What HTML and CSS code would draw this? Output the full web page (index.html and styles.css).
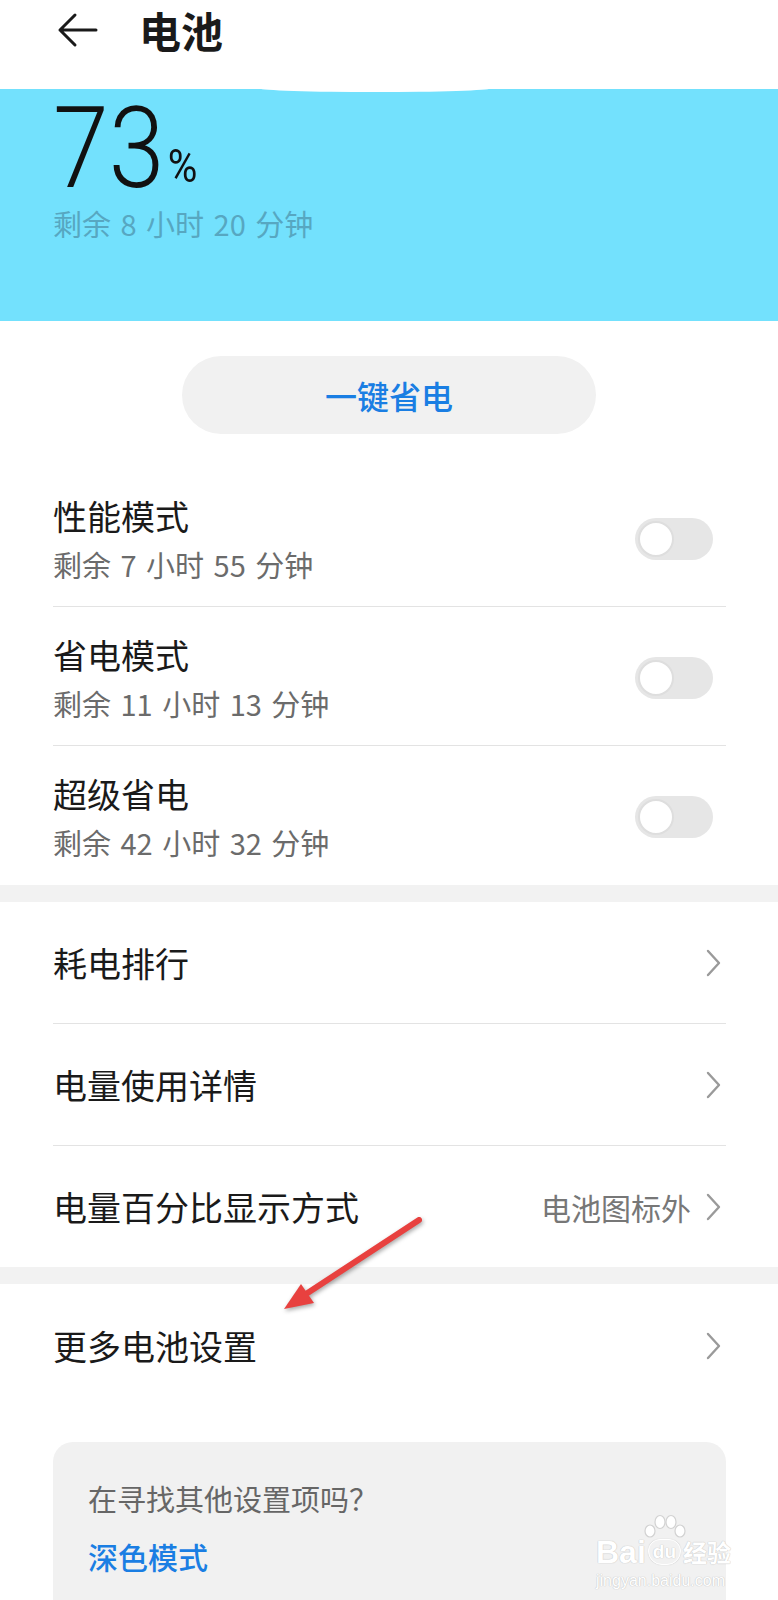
FILE: index.html
```html
<!DOCTYPE html>
<html lang="zh-CN">
<head>
<meta charset="utf-8">
<title>电池</title>
<link rel="stylesheet" href="styles.css">
</head>
<body>
<div class="page">
  <header class="topbar">
    <svg class="back" width="42" height="36" viewBox="0 0 42 36"><path d="M40 18H4M19 3L4 18l15 15" fill="none" stroke="#1a1a1a" stroke-width="3" stroke-linecap="round" stroke-linejoin="round"/></svg>
    <h1 class="title">电池</h1>
  </header>

  <section class="hero">
    <div class="level">73<span class="pct">%</span></div>
    <div class="remain">剩余 8 小时 20 分钟</div>
  </section>

  <div class="savebtn">一键省电</div>

  <section class="group first">
    <div class="trow">
      <div class="ttext"><div class="rtitle">性能模式</div><div class="rsub">剩余 7 小时 55 分钟</div></div>
      <span class="toggle"><span class="knob"></span></span>
    </div>
    <div class="trow">
      <div class="ttext"><div class="rtitle">省电模式</div><div class="rsub">剩余 11 小时 13 分钟</div></div>
      <span class="toggle"><span class="knob"></span></span>
    </div>
    <div class="trow last">
      <div class="ttext"><div class="rtitle">超级省电</div><div class="rsub">剩余 42 小时 32 分钟</div></div>
      <span class="toggle"><span class="knob"></span></span>
    </div>
  </section>

  <div class="band"></div>

  <section class="group">
    <div class="nrow"><span class="rtitle">耗电排行</span><span class="right"><svg class="chev" width="17" height="28" viewBox="0 0 17 28"><path d="M3 2l11 12L3 26" fill="none" stroke="#9a9a9a" stroke-width="2.4" stroke-linecap="round" stroke-linejoin="round"/></svg></span></div>
    <div class="nrow"><span class="rtitle">电量使用详情</span><span class="right"><svg class="chev" width="17" height="28" viewBox="0 0 17 28"><path d="M3 2l11 12L3 26" fill="none" stroke="#9a9a9a" stroke-width="2.4" stroke-linecap="round" stroke-linejoin="round"/></svg></span></div>
    <div class="nrow last"><span class="rtitle">电量百分比显示方式</span><span class="right"><span class="value">电池图标外</span><svg class="chev" width="17" height="28" viewBox="0 0 17 28"><path d="M3 2l11 12L3 26" fill="none" stroke="#9a9a9a" stroke-width="2.4" stroke-linecap="round" stroke-linejoin="round"/></svg></span></div>
  </section>

  <div class="band"></div>

  <section class="group">
    <div class="nrow last more"><span class="rtitle">更多电池设置</span><span class="right"><svg class="chev" width="17" height="28" viewBox="0 0 17 28"><path d="M3 2l11 12L3 26" fill="none" stroke="#9a9a9a" stroke-width="2.4" stroke-linecap="round" stroke-linejoin="round"/></svg></span></div>
  </section>

  <section class="card">
    <div class="ask">在寻找其他设置项吗？</div>
    <div class="link">深色模式</div>
    <div class="link">字体与显示大小</div>
  </section>

  <svg class="annot" width="170" height="110" viewBox="0 0 170 110">
    <line x1="149" y1="10" x2="36" y2="84" stroke="#e8413f" stroke-width="6" stroke-linecap="round"/>
    <polygon points="14,99 44,93 31,74" fill="#e8413f"/>
  </svg>

  <div class="watermark">
    <svg class="paw" width="44" height="26" viewBox="0 0 44 26">
      <ellipse cx="7" cy="17" rx="5" ry="6" fill="#fff" stroke="#d2d2d2" stroke-width="1.2"/>
      <ellipse cx="17" cy="8" rx="5" ry="6.5" fill="#fff" stroke="#d2d2d2" stroke-width="1.2"/>
      <ellipse cx="28" cy="8" rx="5" ry="6.5" fill="#fff" stroke="#d2d2d2" stroke-width="1.2"/>
      <ellipse cx="37" cy="17" rx="5" ry="6" fill="#fff" stroke="#d2d2d2" stroke-width="1.2"/>
    </svg>
    <div class="wmline"><span class="wmbai">Bai</span><span class="wmdu">du</span><span class="wmjy">经验</span></div>
    <div class="wmurl">jingyan.baidu.com</div>
  </div>
</div>
</body>
</html>
```
FILE: styles.css
```css
* { box-sizing: border-box; }
html, body { margin: 0; padding: 0; background: #fff; }
body {
  font-family: "Noto Sans CJK SC", "Noto Sans", sans-serif;
  color: #1a1a1a;
}
.page { position: relative; width: 778px; overflow: hidden; }

.topbar {
  display: flex;
  align-items: center;
  height: 60px;
  padding-left: 56px;
}
.back { display: block; }
.title {
  margin: 0 0 0 41px;
  font-size: 42px;
  font-weight: 700;
  line-height: 60px;
  color: #1a1a1a;
}

.hero {
  position: relative;
  margin-top: 29px;
  height: 232px;
  padding-left: 53px;
  background: #73e1fd;
}
.hero::before {
  content: "";
  position: absolute;
  top: -4px;
  left: 260px;
  width: 230px;
  height: 7px;
  border-radius: 50%;
  background: #fff;
}
.level {
  font-family: Roboto, "Noto Sans", sans-serif;
  font-weight: 300;
  font-size: 114px;
  line-height: 118px;
  height: 118px;
  letter-spacing: 0;
  color: #111;
  transform: scaleX(0.88);
  transform-origin: left center;
}
.pct {
  font-family: Roboto, sans-serif;
  font-weight: 400;
  font-size: 46px;
  line-height: 1;
  margin-left: 4px;
  vertical-align: 5px;
}
.remain {
  font-size: 29px;
  line-height: 32px;
  word-spacing: 3px;
  color: #57a7c1;
}

.savebtn {
  margin: 35px auto 0;
  width: 414px;
  height: 78px;
  border-radius: 39px;
  background: #f1f1f1;
  display: flex;
  align-items: center;
  justify-content: center;
  font-size: 32px;
  font-weight: 500;
  color: #1a7ee3;
}

.group.first { margin-top: 34px; }

.trow {
  display: flex;
  align-items: center;
  justify-content: space-between;
  margin: 0 52px 0 53px;
  padding: 26px 0 16px;
  border-bottom: 1px solid #e3e3e3;
}
.trow.last { border-bottom: none; padding-bottom: 17px; }
.rtitle {
  font-size: 34px;
  line-height: 44px;
  color: #1a1a1a;
}
.rsub {
  font-size: 29px;
  line-height: 52px;
  word-spacing: 3px;
  color: #6b6b6b;
}
.toggle {
  position: relative;
  width: 78px;
  height: 42px;
  margin-right: 13px;
  margin-bottom: 6px;
  border-radius: 21px;
  background: #e6e6e6;
}
.knob {
  position: absolute;
  left: 3px;
  top: 3px;
  width: 36px;
  height: 36px;
  border-radius: 50%;
  background: #fff;
  border: 2px solid #dedede;
}

.band { height: 17px; background: #f2f2f2; }

.nrow {
  display: flex;
  align-items: center;
  justify-content: space-between;
  margin: 0 52px 0 53px;
  height: 122px;
  border-bottom: 1px solid #e3e3e3;
}
.nrow.last { border-bottom: none; height: 121px; }
.nrow.more { height: 123px; }
.right { display: flex; align-items: center; margin-right: 4px; }
.value {
  font-size: 30px;
  line-height: 40px;
  color: #777;
  margin-right: 14px;
}
.chev { display: block; }

.card {
  margin: 35px 52px 0 53px;
  padding: 36px 35px 40px;
  border-radius: 20px;
  background: #f1f1f1;
}
.ask {
  font-size: 29px;
  line-height: 40px;
  color: #666;
}
.link {
  margin-top: 18px;
  font-size: 30px;
  line-height: 40px;
  font-weight: 500;
  color: #1a7ee3;
}

.annot {
  position: absolute;
  left: 270px;
  top: 1210px;
  filter: drop-shadow(1px 2px 2px rgba(0,0,0,0.35));
}

.watermark {
  position: absolute;
  left: 596px;
  top: 1514px;
  width: 150px;
  font-family: "Liberation Sans", Arial, sans-serif;
  color: #fff;
  text-shadow: 0 0 1px #c4c4c4, 0 0 1px #c4c4c4;
}
.paw { display: block; margin-left: 47px; }
.wmline { display: flex; align-items: center; margin-top: -3px; line-height: 30px; height: 30px; }
.wmbai { font-size: 32px; font-weight: 700; }
.wmdu {
  font-size: 19px;
  font-weight: 700;
  margin-left: 2px;
  padding: 0 4px;
  line-height: 24px;
  border: 1.5px solid #fff;
  border-radius: 12px 12px 14px 14px;
  box-shadow: 0 0 1px #bbb;
}
.wmjy { font-family: "Noto Sans CJK SC", sans-serif; font-size: 24px; font-weight: 700; margin-left: 2px; }
.wmurl { font-size: 16px; line-height: 20px; margin-top: 4px; }
```
